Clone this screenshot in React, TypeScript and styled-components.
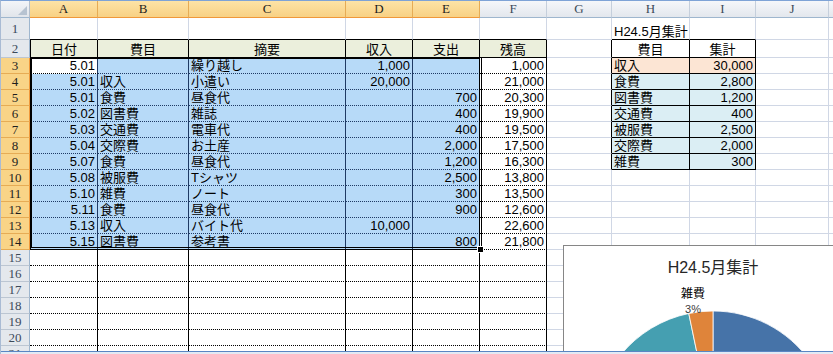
import React from 'react'
import styled, { createGlobalStyle } from 'styled-components'

const GlobalStyle = createGlobalStyle`
  html, body {
    margin: 0;
    padding: 0;
    background: #fff;
  }
  body {
    font-family: "Liberation Sans", "Noto Sans CJK JP", sans-serif;
  }
`

// widths of row header + columns A..K
const COL_W = [29, 68, 91, 157, 67, 67, 67, 65, 78, 66, 73, 80]
const LETTERS = ['A', 'B', 'C', 'D', 'E', 'F', 'G', 'H', 'I', 'J', 'K']
const ROWS = Array.from({ length: 21 }, (_, i) => i + 1)
const ROW_H = ROWS.map(r => (r === 1 ? 22 : r === 2 ? 18 : 16))

const SEL_BG = '#b7daf8'
const HEAD_BG = '#ebefdc'
const PEACH = '#fce5d4'
const AQUA = '#dbeef4'

const HEADERS = ['日付', '費目', '摘要', '収入', '支出', '残高']

const DATA: string[][] = [
  ['5.01', '', '繰り越し', '1,000', '', '1,000'],
  ['5.01', '収入', '小遣い', '20,000', '', '21,000'],
  ['5.01', '食費', '昼食代', '', '700', '20,300'],
  ['5.02', '図書費', '雑誌', '', '400', '19,900'],
  ['5.03', '交通費', '電車代', '', '400', '19,500'],
  ['5.04', '交際費', 'お土産', '', '2,000', '17,500'],
  ['5.07', '食費', '昼食代', '', '1,200', '16,300'],
  ['5.08', '被服費', 'Tシャツ', '', '2,500', '13,800'],
  ['5.10', '雑費', 'ノート', '', '300', '13,500'],
  ['5.11', '食費', '昼食代', '', '900', '12,600'],
  ['5.13', '収入', 'バイト代', '10,000', '', '22,600'],
  ['5.15', '図書費', '参考書', '', '800', '21,800'],
]

const SUMMARY: [string, string][] = [
  ['収入', '30,000'],
  ['食費', '2,800'],
  ['図書費', '1,200'],
  ['交通費', '400'],
  ['被服費', '2,500'],
  ['交際費', '2,000'],
  ['雑費', '300'],
]

const SLICES = [
  { name: '食費', value: 2800, color: '#4673a8' },
  { name: '図書費', value: 1200, color: '#b04a47' },
  { name: '交通費', value: 400, color: '#8fad52' },
  { name: '被服費', value: 2500, color: '#755d96' },
  { name: '交際費', value: 2000, color: '#459fb1' },
  { name: '雑費', value: 300, color: '#df843a' },
]

type Line = 'none' | 'grid' | 'solid' | 'dotted' | 'navy' | 'navyDot'
type Align = 'left' | 'right' | 'center'

const lineCss = (l: Line) => {
  switch (l) {
    case 'grid': return '1px solid #d0d7e5'
    case 'solid': return '1px solid #000'
    case 'dotted': return '1px dotted #000'
    case 'navy': return '1px solid #1f3a64'
    case 'navyDot': return '1px dotted #1f3a64'
    default: return 'none'
  }
}

const Window = styled.div`
  width: 833px;
  height: 354px;
  box-sizing: border-box;
  border-top: 1px solid #7ea3d6;
  border-left: 1px solid #a9bbd4;
  background: #fff;
  overflow: hidden;
`

const Sheet = styled.div`
  position: relative;
  height: 350px;
  overflow: hidden;
  display: grid;
  grid-template-columns: ${COL_W.map(w => w + 'px').join(' ')};
  grid-template-rows: 17px ${ROW_H.map(h => h + 'px').join(' ')};
`

const BottomEdge = styled.div`
  height: 1px;
  background: #5a86c4;
  border-bottom: 2px solid #e3eaf4;
`

const Corner = styled.div`
  box-sizing: border-box;
  display: flex;
  align-items: flex-end;
  justify-content: flex-end;
  padding: 0 2px 2px 0;
  background: linear-gradient(#f3f5f8, #e1e5eb);
  border-right: 1px solid #b4bfcc;
  border-bottom: 1px solid #9eb6ce;
`

const ColHead = styled.div<{ $sel: boolean }>`
  box-sizing: border-box;
  display: flex;
  align-items: center;
  justify-content: center;
  font-family: "Liberation Serif", serif;
  font-size: 13px;
  color: ${p => (p.$sel ? '#1e1e1e' : '#3c4a5a')};
  background: ${p => (p.$sel ? 'linear-gradient(#fde3a6, #f8d184)' : 'linear-gradient(#f5f7fa, #e3e7ed)')};
  border-right: 1px solid ${p => (p.$sel ? '#e6ac55' : '#c5cfdc')};
  border-bottom: 1px solid ${p => (p.$sel ? '#f0983a' : '#9eb6ce')};
`

const RowHead = styled.div<{ $sel: boolean }>`
  box-sizing: border-box;
  display: flex;
  align-items: center;
  justify-content: center;
  font-family: "Liberation Serif", serif;
  font-size: 13px;
  color: ${p => (p.$sel ? '#1e1e1e' : '#3c4a5a')};
  background: ${p => (p.$sel ? '#f9d487' : '#e4e8ed')};
  border-right: 1px solid ${p => (p.$sel ? '#f0983a' : '#9eb6ce')};
  border-bottom: 1px solid ${p => (p.$sel ? '#e6ac55' : '#bcc6d2')};
`

const Cell = styled.div<{ $r: Line; $b: Line; $l: Line; $bg?: string; $align: Align }>`
  box-sizing: border-box;
  min-width: 0;
  display: flex;
  align-items: flex-end;
  justify-content: ${p => (p.$align === 'right' ? 'flex-end' : p.$align === 'center' ? 'center' : 'flex-start')};
  padding: 0 2px;
  font-size: 13px;
  line-height: 15px;
  color: #000;
  white-space: nowrap;
  background: ${p => p.$bg ?? 'transparent'};
  border-right: ${p => lineCss(p.$r)};
  border-bottom: ${p => lineCss(p.$b)};
  border-left: ${p => lineCss(p.$l)};
`

// selection frame and fill handle lie over the cells
const Selection = styled.div`
  position: absolute;
  left: 29px;
  top: 56px;
  width: 452px;
  height: 193px;
  box-sizing: border-box;
  border-top: 2px solid #000;
  border-left: 2px solid #000;
  border-right: 3px double #000;
  border-bottom: 3px double #000;
  pointer-events: none;
`

const FillHandle = styled.div`
  position: absolute;
  left: 476px;
  top: 245px;
  width: 5px;
  height: 5px;
  background: #000;
  border: 1px solid #fff;
`

// embedded chart object floating over the sheet
const Chart = styled.div`
  position: absolute;
  left: 562px;
  top: 244px;
  width: 300px;
  height: 240px;
  box-sizing: border-box;
  border: 1px solid #868686;
  background: #fff;

  svg {
    display: block;
  }
`

const ChartText = styled.text<{ $size: number }>`
  font-family: "Liberation Sans", "Noto Sans CJK JP", sans-serif;
  font-size: ${p => p.$size}px;
`

type CellInfo = { text: string; r: Line; b: Line; l: Line; bg?: string; align: Align }

function cellInfo(row: number, c: number): CellInfo {
  const info: CellInfo = { text: '', r: 'grid', b: 'grid', l: 'none', align: 'left' }

  if (c <= 5) {
    if (row === 1) info.b = 'solid'
    if (row >= 2) {
      info.r = 'solid'
      info.b = row === 2 ? 'solid' : 'dotted'
    }
    if (row === 2) {
      info.bg = HEAD_BG
      info.align = 'center'
      info.text = HEADERS[c]
      if (c === 0) info.l = 'solid'
    }
    if (row >= 3 && row <= 14) {
      info.text = DATA[row - 3][c]
      info.align = c === 1 || c === 2 ? 'left' : 'right'
      if (c <= 4) {
        if (!(row === 3 && c === 0)) {
          info.bg = SEL_BG
          info.b = 'navyDot'
        }
        if (c <= 3) info.r = 'navy'
      }
    }
  }

  if (c === 6 && row >= 2 && row <= 9) info.r = 'solid'

  if (c === 7 || c === 8) {
    if (row === 1) {
      info.b = 'solid'
      if (c === 7) info.text = 'H24.5月集計'
    }
    if (row >= 2 && row <= 9) {
      info.r = 'solid'
      info.b = 'solid'
      if (row === 2) {
        info.bg = '#fff'
        info.align = 'center'
        info.text = c === 7 ? '費目' : '集計'
      } else {
        info.bg = row === 3 ? PEACH : AQUA
        info.text = SUMMARY[row - 3][c - 7]
        info.align = c === 7 ? 'left' : 'right'
      }
    }
  }

  return info
}

function slicePath(cx: number, cy: number, r: number, from: number, to: number) {
  const pt = (f: number) => {
    const a = f * 2 * Math.PI
    return `${cx + r * Math.sin(a)} ${cy - r * Math.cos(a)}`
  }
  const large = to - from > 0.5 ? 1 : 0
  return `M ${cx} ${cy} L ${pt(from)} A ${r} ${r} 0 ${large} 1 ${pt(to)} Z`
}

function PieChart() {
  const total = SLICES.reduce((s, x) => s + x.value, 0)
  let acc = 0
  return (
    <svg width={298} height={238}>
      {SLICES.map(s => {
        const from = acc / total
        acc += s.value
        const to = acc / total
        return <path key={s.name} d={slicePath(149, 184, 119, from, to)} fill={s.color} stroke="#fff" strokeWidth={0.8} />
      })}
      <ChartText $size={16} x={149} y={27} textAnchor="middle" fill="#262626">H24.5月集計</ChartText>
      <ChartText $size={12} x={129} y={52} textAnchor="middle" fill="#000">雑費</ChartText>
      <ChartText $size={11} x={129} y={67} textAnchor="middle" fill="#404040">3%</ChartText>
    </svg>
  )
}

export default function App() {
  return (
    <>
      <GlobalStyle />
      <Window>
        <Sheet>
          <Corner>
            <svg width="9" height="9" viewBox="0 0 9 9">
              <path d="M9 0 L9 9 L0 9 Z" fill="#b7c3d1" />
            </svg>
          </Corner>
          {LETTERS.map((l, i) => (
            <ColHead key={l} $sel={i <= 4}>{i < 10 ? l : ''}</ColHead>
          ))}
          {ROWS.map(row => (
            <React.Fragment key={row}>
              <RowHead $sel={row >= 3 && row <= 14}>{row}</RowHead>
              {LETTERS.map((l, c) => {
                const p = cellInfo(row, c)
                return (
                  <Cell key={l} $r={p.r} $b={p.b} $l={p.l} $bg={p.bg} $align={p.align}>
                    {p.text}
                  </Cell>
                )
              })}
            </React.Fragment>
          ))}
          <Selection />
          <FillHandle />
          <Chart>
            <PieChart />
          </Chart>
        </Sheet>
        <BottomEdge />
      </Window>
    </>
  )
}
